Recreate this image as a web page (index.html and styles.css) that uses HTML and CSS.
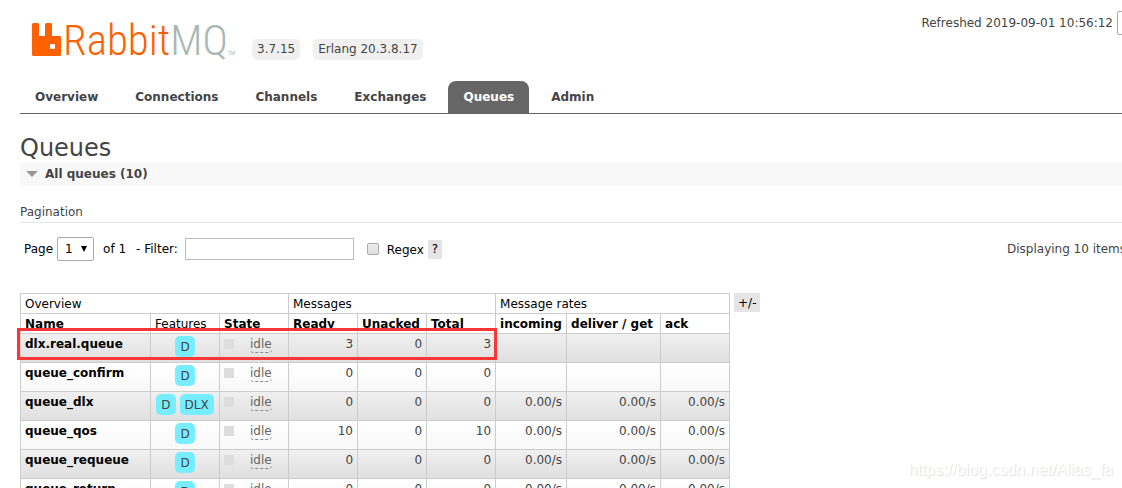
FILE: index.html
```html
<!DOCTYPE html>
<html lang="en">
<head>
<meta charset="utf-8">
<title>RabbitMQ Management</title>
<link rel="stylesheet" href="styles.css">
</head>
<body>
<header class="header">
  <div class="brand">
    <svg class="logo" viewBox="0 0 210 40" role="img" aria-label="RabbitMQ">
      <path class="logo-mark" fill-rule="evenodd" d="M2 3.500Q2 2 3.500 2H7.500Q9 2 9 3.500V14Q9 15 10 15H14Q15 15 15 14V3.500Q15 2 16.500 2H20.500Q22 2 22 3.500V14Q22 15 23 15H29.500Q31 15 31 16.500V33.500Q31 35 29.500 35H3.500Q2 35 2 33.500ZM21 23Q20 23 20 24V27Q20 28 21 28H24Q25 28 25 27V24Q25 23 24 23Z"/>
      <text class="logo-text" x="33" y="34"><tspan class="logo-rabbit">Rabbit</tspan><tspan class="logo-mq">MQ</tspan></text>
      <text class="logo-tm" x="198" y="34">TM</text>
    </svg>
    <span class="version">3.7.15</span>
    <span class="version">Erlang 20.3.8.17</span>
  </div>
  <div class="status">
    <span>Refreshed 2019-09-01 10:56:12</span>
    <select class="refresh" aria-label="Refresh interval"></select>
  </div>
</header>
<nav class="tabs">
  <a class="tab" href="#">Overview</a>
  <a class="tab" href="#">Connections</a>
  <a class="tab" href="#">Channels</a>
  <a class="tab" href="#">Exchanges</a>
  <a class="tab selected" href="#">Queues</a>
  <a class="tab" href="#">Admin</a>
</nav>
<main class="main">
  <h1 class="title">Queues</h1>
  <h2 class="section"><svg class="caret" viewBox="0 0 12 6" aria-hidden="true"><path d="M0 0H12L6 6Z"/></svg>All queues (10)</h2>
  <h3 class="subhead">Pagination</h3>
  <form class="filters">
    <label for="page">Page</label>
    <span class="picker">
      <select class="page" id="page"><option>1</option></select>
      <svg class="arrow" viewBox="0 0 6 6" aria-hidden="true"><path d="M0 0H6L3 6Z"/></svg>
    </span>
    <span class="of">of 1</span>
    <label class="filter-label" for="filter">- Filter:</label>
    <input class="filter" id="filter" type="text">
    <input class="check" id="regex" type="checkbox">
    <label class="regex" for="regex">Regex</label>
    <button class="tool help" type="button">?</button>
    <span class="displaying">Displaying 10 items</span>
  </form>
  <div class="listing">
    <div class="table-wrap">
      <table class="queues">
        <colgroup><col class="c-name"><col class="c-std"><col class="c-std"><col class="c-std"><col class="c-std"><col class="c-std"><col class="c-in"><col class="c-get"><col class="c-std"></colgroup>
        <thead>
          <tr><th class="group" colspan="3">Overview</th><th class="group" colspan="3">Messages</th><th class="group" colspan="3">Message rates</th></tr>
          <tr><th>Name</th><th class="group">Features</th><th>State</th><th>Ready</th><th>Unacked</th><th>Total</th><th>incoming</th><th>deliver / get</th><th>ack</th></tr>
        </thead>
        <tbody>
          <tr><td><a class="name" href="#">dlx.real.queue</a></td><td><div class="features"><span class="badge">D</span></div></td><td><div class="state"><i class="dot"></i><span class="idle">idle</span></div></td><td class="num">3</td><td class="num">0</td><td class="num">3</td><td></td><td></td><td></td></tr>
          <tr><td><a class="name" href="#">queue_confirm</a></td><td><div class="features"><span class="badge">D</span></div></td><td><div class="state"><i class="dot"></i><span class="idle">idle</span></div></td><td class="num">0</td><td class="num">0</td><td class="num">0</td><td></td><td></td><td></td></tr>
          <tr><td><a class="name" href="#">queue_dlx</a></td><td><div class="features"><span class="badge">D</span><span class="badge">DLX</span></div></td><td><div class="state"><i class="dot"></i><span class="idle">idle</span></div></td><td class="num">0</td><td class="num">0</td><td class="num">0</td><td class="num">0.00/s</td><td class="num">0.00/s</td><td class="num">0.00/s</td></tr>
          <tr><td><a class="name" href="#">queue_qos</a></td><td><div class="features"><span class="badge">D</span></div></td><td><div class="state"><i class="dot"></i><span class="idle">idle</span></div></td><td class="num">10</td><td class="num">0</td><td class="num">10</td><td class="num">0.00/s</td><td class="num">0.00/s</td><td class="num">0.00/s</td></tr>
          <tr><td><a class="name" href="#">queue_requeue</a></td><td><div class="features"><span class="badge">D</span></div></td><td><div class="state"><i class="dot"></i><span class="idle">idle</span></div></td><td class="num">0</td><td class="num">0</td><td class="num">0</td><td class="num">0.00/s</td><td class="num">0.00/s</td><td class="num">0.00/s</td></tr>
          <tr><td><a class="name" href="#">queue_return</a></td><td><div class="features"><span class="badge">D</span></div></td><td><div class="state"><i class="dot"></i><span class="idle">idle</span></div></td><td class="num">0</td><td class="num">0</td><td class="num">0</td><td class="num">0.00/s</td><td class="num">0.00/s</td><td class="num">0.00/s</td></tr>
        </tbody>
      </table>
      <div class="highlight"></div>
    </div>
    <button class="tool columns" type="button">+/-</button>
  </div>
</main>
<div class="watermark">https://blog.csdn.net/Alias_fa</div>
</body>
</html>
```
FILE: styles.css
```css
* { box-sizing: border-box; }
html { height: 100%; overflow: hidden; }
body {
  position: relative;
  height: 100%;
  margin: 0;
  padding-left: 20px;
  overflow: hidden;
  background: #fff;
  color: #444;
  font: 12px/16px Verdana, "DejaVu Sans", sans-serif;
}
h1, h2, h3 { margin: 0; }
a { color: inherit; text-decoration: none; }
select, input, button { margin: 0; font: inherit; color: #000; }

.header { display: flex; justify-content: space-between; height: 81px; }
.brand { display: flex; align-items: flex-start; padding: 21px 0 0 10px; }
.logo { width: 210px; height: 40px; margin-right: 12px; }
.logo-mark, .logo-rabbit { fill: #ff6000; }
.logo-mq { fill: #a9b7b1; }
.logo-text { font: 300 43px "Roboto Condensed", "Open Sans Condensed", Lato, sans-serif; }
.logo-tm { font: 5px "Liberation Sans", sans-serif; fill: #a9b7b1; }
.version {
  margin: 18px 13px 0 0;
  padding: 2px 5px 3px;
  border-radius: 5px;
  background: #f0f0f0;
}
.status { display: flex; align-items: flex-start; gap: 4px; padding-top: 11px; white-space: nowrap; }
.status span { padding-top: 4px; }
.refresh {
  flex: none;
  width: 150px;
  height: 24px;
  margin-right: -145px;
  appearance: none;
  border: 1px solid #aaa;
  border-radius: 2px;
  background: #fff;
}

.tabs { display: flex; gap: 7px; border-bottom: 1px solid #666; }
.tab { padding: 8px 15px; border-radius: 8px 8px 0 0; font-weight: bold; }
.tab.selected { background: #666; color: #fff; }

.title { padding-top: 20px; font-size: 24px; line-height: 28px; font-weight: normal; }
.section {
  display: flex;
  align-items: center;
  gap: 7px;
  padding: 4px 6px;
  background: #f8f8f8;
  font-size: 12px;
}
.caret { width: 12px; height: 6px; fill: #999; }
.subhead {
  margin-top: 18px;
  padding-bottom: 2px;
  border-bottom: 1px solid #e4e4e4;
  font-size: 12px;
  font-weight: normal;
}
.filters { display: flex; align-items: center; height: 24px; margin: 14px 0 32px; padding-left: 4px; color: #000; white-space: nowrap; }
.picker { position: relative; display: flex; margin: 0 9px 0 4px; }
.page { width: 37px; height: 24px; padding: 0 7px; appearance: none; border: 1px solid #aaa; border-radius: 2px; background: #fff; }
.arrow { position: absolute; top: 9px; right: 7px; width: 6px; height: 6px; pointer-events: none; }
.of { margin-right: 10px; }
.filter-label { margin-right: 7px; }
.filter { width: 169px; height: 22px; padding: 2px; border: 1px solid #bbb; }
.check {
  width: 12px;
  height: 12px;
  margin: 0 8px 0 13px;
  appearance: none;
  border: 1px solid #aaa;
  border-radius: 2px;
  background: linear-gradient(#eee, #ddd);
}
.regex { padding-top: 2px; }
.tool { padding: 1px 4px 2px; border: 0; background: #e4e4e4; }
.help { margin-left: 4px; }
.displaying { width: 115px; margin-left: auto; color: #444; }

.listing { display: flex; align-items: flex-start; gap: 4px; }
.table-wrap { position: relative; }
.queues { width: 710px; table-layout: fixed; border-collapse: collapse; }
.c-name { width: 130px; }
.c-std { width: 69px; }
.c-in { width: 71px; }
.c-get { width: 94px; }
th, td { border: 1px solid #ccc; white-space: nowrap; }
th { padding: 2px 4px 1px; color: #000; text-align: left; }
th.group { font-weight: normal; }
td { height: 29px; padding: 2px 4px; vertical-align: top; }
tbody tr:nth-child(odd) { background: linear-gradient(#f0f0f0, #dfdfdf); }
tbody tr:nth-child(even) { background: linear-gradient(#fff, #f8f8f8); }
.name { color: #000; font-weight: bold; }
.num { text-align: right; }
.features { display: flex; justify-content: center; gap: 4px; margin: 0 -4px; }
.badge { padding: 3px 5px 2px; border-radius: 5px; background: #76eeff; }
.state { display: flex; align-items: flex-start; gap: 16px; }
.dot { width: 10px; height: 10px; margin-top: 3px; background: #ddd; }
.idle { height: 17px; border-bottom: 1px dashed #888; border-radius: 4px; color: #666; }
.highlight { position: absolute; top: 35px; left: -3px; width: 480px; height: 32px; border: 3px solid #fb3636; }
.columns { padding: 2px 4px 1px; }
.watermark {
  position: absolute;
  right: 9px;
  bottom: 8px;
  color: #fff;
  font: 16px/20px "Liberation Sans", sans-serif;
  text-shadow: 1px 1px 1px #ddd;
}
```
